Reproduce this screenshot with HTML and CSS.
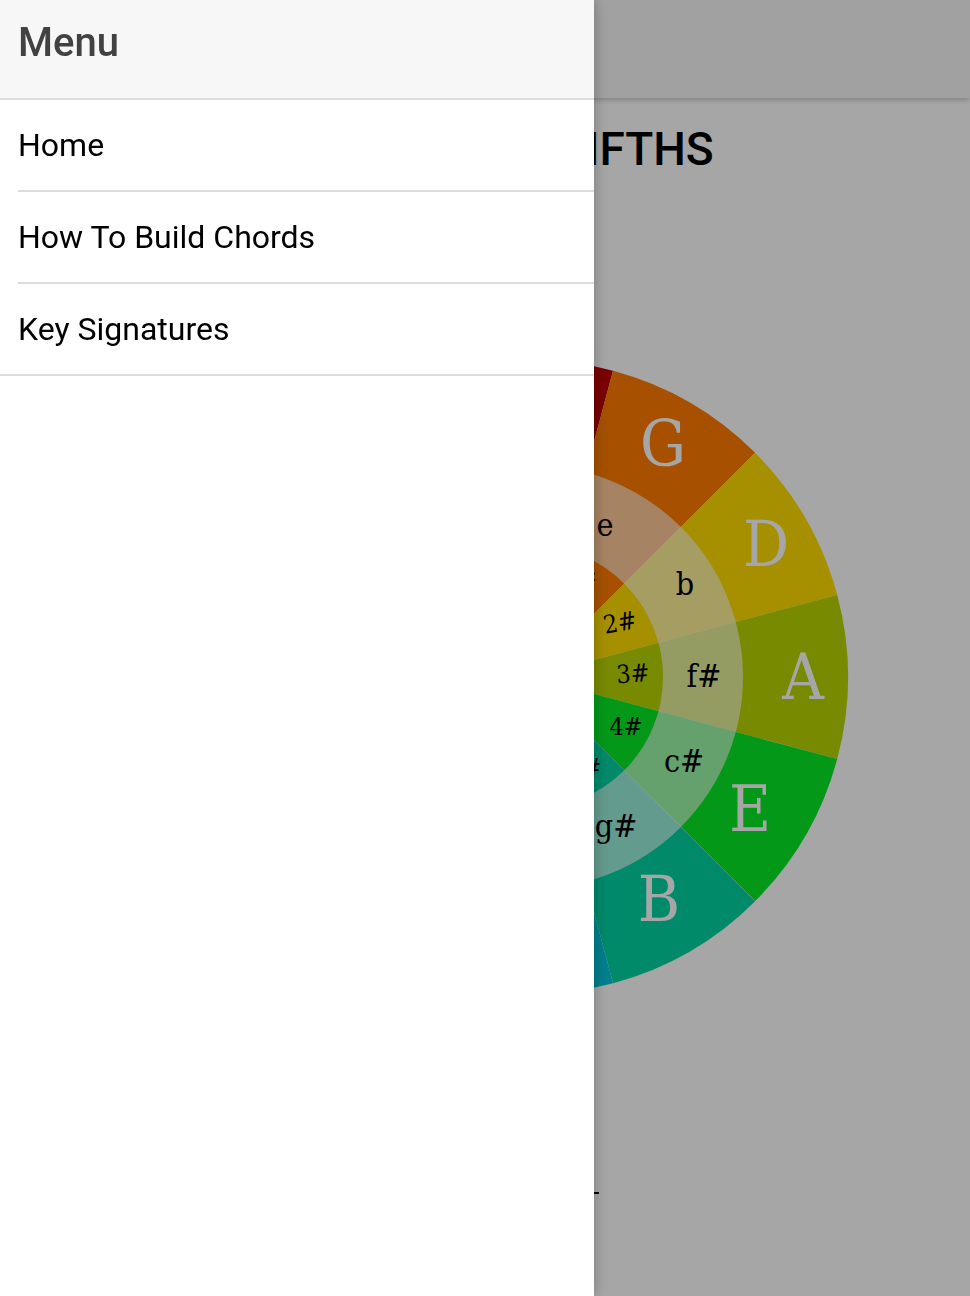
FILE: index.html
```html
<!DOCTYPE html>
<html lang="en">
<head>
<meta charset="utf-8">
<title>Circle of Fifths</title>
<link rel="stylesheet" href="styles.css">
</head>
<body>
<div class="page">
  <header class="toolbar"></header>
  <main class="content">
    <h1 class="title">CIRCLE OF FIFTHS</h1>
    <svg class="wheel" width="640" height="640" viewBox="-320 -320 640 640">
      <g class="sectors">
        <circle r="189" pathLength="360" stroke-dasharray="30 330" stroke="#bc0000" transform="rotate(-105)"/>
        <circle r="189" pathLength="360" stroke-dasharray="30 330" stroke="#ff7c00" transform="rotate(-75)"/>
        <circle r="189" pathLength="360" stroke-dasharray="30 330" stroke="#ffde00" transform="rotate(-45)"/>
        <circle r="189" pathLength="360" stroke-dasharray="30 330" stroke="#b8d400" transform="rotate(-15)"/>
        <circle r="189" pathLength="360" stroke-dasharray="30 330" stroke="#06ea25" transform="rotate(15)"/>
        <circle r="189" pathLength="360" stroke-dasharray="30 330" stroke="#00d4a4" transform="rotate(45)"/>
        <circle r="189" pathLength="360" stroke-dasharray="30 330" stroke="#00c4d8" transform="rotate(75)"/>
        <circle r="189" pathLength="360" stroke-dasharray="30 330" stroke="#0077dd" transform="rotate(105)"/>
        <circle r="189" pathLength="360" stroke-dasharray="30 330" stroke="#2a2acc" transform="rotate(135)"/>
        <circle r="189" pathLength="360" stroke-dasharray="30 330" stroke="#7700cc" transform="rotate(165)"/>
        <circle r="189" pathLength="360" stroke-dasharray="30 330" stroke="#bb00bb" transform="rotate(195)"/>
        <circle r="189" pathLength="360" stroke-dasharray="30 330" stroke="#dd0066" transform="rotate(225)"/>
      </g>
      <circle class="minor-ring" r="172"/>
      <circle class="hub" r="56"/>
      <g class="major">
        <text x="0" y="-247">C</text>
        <text x="132" y="-211">G</text>
        <text x="235" y="-111">D</text>
        <text x="272" y="22">A</text>
        <text x="219" y="154">E</text>
        <text x="128" y="244">B</text>
        <text x="0" y="278">F#</text>
        <text x="-128" y="244">D♭</text>
        <text x="-219" y="154">A♭</text>
        <text x="-265" y="22">E♭</text>
        <text x="-235" y="-111">B♭</text>
        <text x="-132" y="-211">F</text>
      </g>
      <g class="minor">
        <text x="0" y="-162">a</text>
        <text x="74" y="-141">e</text>
        <text x="154" y="-82">b</text>
        <text x="173" y="10">f#</text>
        <text x="153" y="95">c#</text>
        <text x="85" y="160">g#</text>
        <text x="0" y="182">d#</text>
        <text x="-86" y="159">b♭</text>
        <text x="-149" y="96">f</text>
        <text x="-172" y="10">c</text>
        <text x="-149" y="-76">g</text>
        <text x="-86" y="-139">d</text>
      </g>
      <g class="sig">
        <text x="50" y="-88" transform="rotate(-14 50 -96)">1#</text>
        <text x="89" y="-46" transform="rotate(-10 89 -54)">2#</text>
        <text x="102" y="5" transform="rotate(-4 102 -4)">3#</text>
        <text x="95" y="58">4#</text>
        <text x="54" y="99">5#</text>
        <text x="0" y="112">6#</text>
        <text x="-52" y="99">5♭</text>
        <text x="-95" y="58">4♭</text>
        <text x="-102" y="5">3♭</text>
        <text x="-89" y="-46">2♭</text>
        <text x="-50" y="-88">1♭</text>
      </g>
    </svg>
    <div class="footer-rule"></div>
  </main>
</div>
<div class="backdrop"></div>
<nav class="menu">
  <div class="menu-header"><span class="menu-title">Menu</span></div>
  <ul class="menu-list">
    <li class="menu-item">Home</li>
    <li class="menu-item">How To Build Chords</li>
    <li class="menu-item menu-item-last">Key Signatures</li>
  </ul>
</nav>
</body>
</html>
```
FILE: styles.css
```css
* { box-sizing: border-box; }

html, body {
  margin: 0;
  padding: 0;
  width: 970px;
  height: 1296px;
  overflow: hidden;
  background: #ffffff;
  font-family: Roboto, "Liberation Sans", sans-serif;
}

.page {
  width: 970px;
  height: 1296px;
  background: #ffffff;
}

.toolbar {
  height: 98px;
  background: #f7f7f7;
  box-shadow: 0 2px 5px rgba(0, 0, 0, 0.22);
  position: relative;
  z-index: 1;
}

.content {
  display: flex;
  flex-direction: column;
}

.title {
  margin: 23px 0 0;
  padding-left: 72px;
  font-size: 46px;
  line-height: 56px;
  font-weight: 500;
  color: #000;
  text-align: center;
}

.wheel {
  display: block;
  margin: 180px 0 0 211px;
  overflow: visible;
}

.sectors circle {
  fill: none;
  stroke-width: 256;
}

.minor-ring {
  fill: none;
  stroke: #ffffff;
  stroke-opacity: 0.6;
  stroke-width: 80;
}

.hub {
  fill: #ffffff;
}

.major text,
.minor text,
.sig text {
  font-family: "DejaVu Serif", "Liberation Serif", serif;
  font-stretch: condensed;
  text-anchor: middle;
}

.major text {
  fill: #ffffff;
  font-size: 64px;
}

.minor text {
  fill: #000000;
  font-size: 32px;
}

.sig text {
  fill: #000000;
  font-size: 25px;
}

.footer-rule {
  width: 60px;
  height: 2px;
  margin: 195px 0 0 539px;
  background: #000;
}

.backdrop {
  position: fixed;
  inset: 0;
  background: rgba(0, 0, 0, 0.35);
  z-index: 5;
}

.menu {
  position: fixed;
  top: 0;
  left: 0;
  bottom: 0;
  width: 594px;
  background: #ffffff;
  box-shadow: 0 0 14px rgba(0, 0, 0, 0.28);
  z-index: 10;
}

.menu-header {
  height: 100px;
  padding: 19px 18px 0;
  background: #f7f7f7;
  border-bottom: 2px solid #dcdcdc;
}

.menu-title {
  display: block;
  font-size: 40px;
  line-height: 48px;
  font-weight: 500;
  color: #424242;
}

.menu-list {
  list-style: none;
  margin: 0;
  padding: 0;
}

.menu-item {
  height: 92px;
  margin-left: 18px;
  display: flex;
  align-items: center;
  font-size: 32px;
  color: #000;
  border-bottom: 2px solid #dcdcdc;
}

.menu-item-last {
  margin-left: 0;
  padding-left: 18px;
}
```
